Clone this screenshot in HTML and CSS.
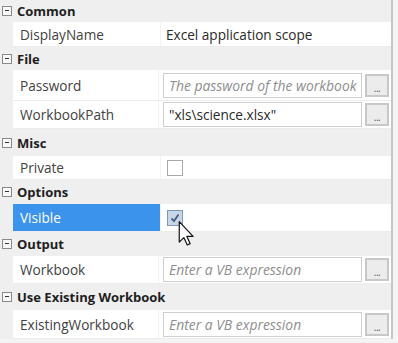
FILE: index.html
```html
<!DOCTYPE html>
<html>
<head>
<meta charset="utf-8">
<link rel="stylesheet" href="styles.css">
</head>
<body>
<div class="page">
  <div class="grid">
    <div class="cat h22"><span class="toggle"></span><span class="cat-name">Common</span></div>
    <div class="prop h25"><div class="name">DisplayName</div><div class="val"><span class="text">Excel application scope</span></div></div>

    <div class="cat h23"><span class="toggle"></span><span class="cat-name">File</span></div>
    <div class="prop h31"><div class="name">Password</div><div class="val"><div class="input ph">The password of the workbook</div><div class="btn">...</div></div></div>
    <div class="prop h28"><div class="name">WorkbookPath</div><div class="val"><div class="input">"xls\science.xlsx"</div><div class="btn">...</div></div></div>

    <div class="cat h27"><span class="toggle"></span><span class="cat-name">Misc</span></div>
    <div class="prop h24"><div class="name">Private</div><div class="val"><span class="check"></span></div></div>

    <div class="cat h24"><span class="toggle"></span><span class="cat-name">Options</span></div>
    <div class="prop h28"><div class="name selected">Visible</div><div class="val"><span class="check checked"><svg viewBox="0 0 12 12" width="12" height="12"><path d="M2.5 6.5 L5 9 L9.5 2.5" fill="none" stroke="#4a5f7e" stroke-width="1.8"/></svg></span></div></div>

    <div class="cat h24"><span class="toggle"></span><span class="cat-name">Output</span></div>
    <div class="prop h28"><div class="name">Workbook</div><div class="val"><div class="input ph">Enter a VB expression</div><div class="btn">...</div></div></div>

    <div class="cat h26"><span class="toggle"></span><span class="cat-name">Use Existing Workbook</span></div>
    <div class="prop h29"><div class="name">ExistingWorkbook</div><div class="val"><div class="input ph">Enter a VB expression</div><div class="btn">...</div></div></div>
  </div>
  <svg class="cursor" width="17" height="25" viewBox="0 0 12 19"><path d="M0.5 0.5 L0.5 16 L4 12.6 L6.6 18.2 L8.8 17.2 L6.3 11.7 L11 11.7 Z" fill="#fff" stroke="#111" stroke-width="0.9" stroke-linejoin="round"/></svg>
</div>
</body>
</html>
```

FILE: styles.css
```css
html, body {
  margin: 0;
  padding: 0;
  background: #f4f4f4;
}
.page {
  position: relative;
  width: 398px;
  height: 343px;
  overflow: hidden;
  font-family: "Open Sans", "Noto Sans", sans-serif;
  font-size: 13.6px;
  color: #3a3a3a;
}
.grid {
  width: 391px;
  border-right: 2px solid #c6c6c6;
  background: #efefef;
  display: flex;
  flex-direction: column;
}
.h22 { height: 22px; }
.h23 { height: 23px; }
.h24 { height: 24px; }
.h25 { height: 25px; }
.h26 { height: 26px; }
.h27 { height: 27px; }
.h28 { height: 28px; }
.h29 { height: 29px; }
.h31 { height: 31px; }

.cat {
  display: flex;
  align-items: center;
  background: #efefef;
  box-sizing: border-box;
}
.toggle {
  width: 8px;
  height: 8px;
  border: 1px solid #8a8a8a;
  margin-left: 2px;
  margin-right: 5px;
  position: relative;
  background: #f8f8f8;
}
.toggle::after {
  content: "";
  position: absolute;
  left: 2px;
  right: 2px;
  top: 3px;
  height: 1px;
  background: #333;
}
.cat-name {
  font-weight: 700;
  font-size: 13px;
  color: #1e1e1e;
}
.prop {
  display: flex;
  margin-left: 13px;
  background: #fff;
  box-sizing: border-box;
  border-bottom: 1px solid #ececec;
}
.name {
  width: 147px;
  padding-left: 7px;
  box-sizing: border-box;
  display: flex;
  align-items: center;
  color: #424242;
}
.name.selected {
  background: #3b93ec;
  color: #fff;
}
.val {
  flex: 1;
  display: flex;
  align-items: center;
  padding-left: 4px;
  padding-right: 2px;
  gap: 3px;
  border-left: 1px solid #f2f2f2;
}
.text {
  padding-left: 1px;
  color: #2a2a2a;
}
.input {
  width: 199px;
  height: 25px;
  box-sizing: border-box;
  border: 1px solid #cfcfcf;
  background: #fff;
  padding-left: 5px;
  display: flex;
  align-items: center;
  color: #2a2a2a;
  white-space: nowrap;
  overflow: hidden;
}
.input.ph {
  font-style: italic;
  font-size: 13.9px;
  color: #8e8e8e;
}
.btn {
  width: 24px;
  height: 23px;
  box-sizing: border-box;
  border: 2px solid #c8c8c8;
  background: #ececec;
  color: #555;
  font-size: 10px;
  display: flex;
  align-items: flex-end;
  justify-content: center;
  line-height: 14px;
  letter-spacing: -0.5px;
}
.check {
  width: 16px;
  height: 16px;
  box-sizing: border-box;
  border: 1px solid #a8a8a8;
  background: #fff;
  margin-left: 2px;
  display: flex;
  align-items: center;
  justify-content: center;
}
.check.checked {
  background: #c9d6e8;
  border-color: #8098bb;
}
.cursor {
  position: absolute;
  left: 178px;
  top: 221px;
}
```
